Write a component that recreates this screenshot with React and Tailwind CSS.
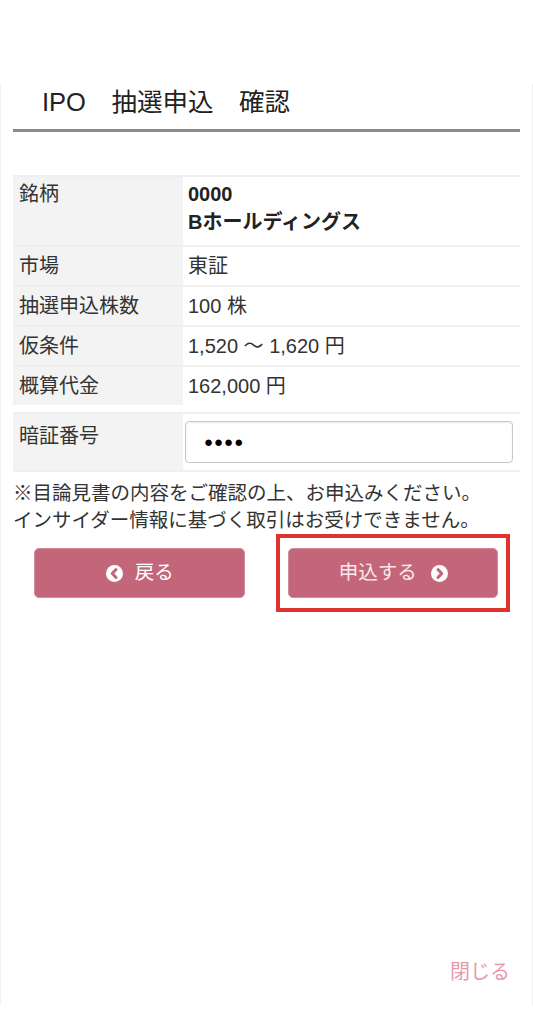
import React from "react";

const rows = [
  { label: "市場", value: "東証" },
  { label: "抽選申込株数", value: "100 株" },
  { label: "仮条件", value: "1,520 〜 1,620 円" },
  { label: "概算代金", value: "162,000 円" },
];

const ChevronCircle = ({ dir = "left" }) => (
  <svg width="17" height="17" viewBox="0 0 16 16">
    <circle cx="8" cy="8" r="8" fill="#ffffff" />
    {dir === "left" ? (
      <path d="M9.4 4.4 5.8 8l3.6 3.6" fill="none" stroke="#c46679" strokeWidth="2.8" strokeLinecap="round" strokeLinejoin="round" />
    ) : (
      <path d="M6.6 4.4 10.2 8l-3.6 3.6" fill="none" stroke="#c46679" strokeWidth="2.8" strokeLinecap="round" strokeLinejoin="round" />
    )}
  </svg>
);

export default function App() {
  return (
    <div
      className="h-[1025px] overflow-hidden bg-white text-[#333]"
      style={{ fontFamily: '"Liberation Sans", "Noto Sans CJK JP", sans-serif' }}
    >
      <div className="mt-[104px] h-[921px] border-x border-[#f1f1f1] px-[12px]">
        {/* Title */}
        <div className="-mt-[20px]">
          <h1 className="pl-[29px] text-[25.5px] leading-[36px] text-[#222]">
            IPO　抽選申込　確認
          </h1>
          <div className="mt-[9px] h-[3px] bg-[#8c8c8c]" />
        </div>

        {/* Detail table */}
        <div className="mt-[43px] text-[20px]">
          <div className="flex border-t-2 border-[#efefef]">
            <div className="h-[68px] w-[170px] shrink-0 bg-[#f3f3f3] px-[6px] pt-[3px] leading-[28px]">
              銘柄
            </div>
            <div className="flex-1 px-[5px] pt-[3px] font-semibold leading-[28px] text-[#222]">
              <div>0000</div>
              <div>Bホールディングス</div>
            </div>
          </div>
          {rows.map((row) => (
            <div key={row.label} className="flex border-t-2 border-[#efefef]">
              <div className="w-[170px] shrink-0 bg-[#f3f3f3] px-[6px] py-[5px] leading-[28px]">
                {row.label}
              </div>
              <div className="flex-1 px-[5px] py-[5px] leading-[28px]">{row.value}</div>
            </div>
          ))}
        </div>

        {/* PIN */}
        <div className="mt-[7px] flex border-y-2 border-[#efefef] text-[20px]">
          <div className="h-[56px] w-[170px] shrink-0 bg-[#f3f3f3] px-[6px] pt-[8px] leading-[28px]">
            暗証番号
          </div>
          <div className="flex-1 pl-[2px] pr-[7px] pt-[7px]">
            <div className="flex h-[42px] items-center rounded-[4px] border border-[#c8c8c8] pl-[18px] text-[15px] tracking-[1px] text-black shadow-[inset_0_1px_2px_rgba(0,0,0,0.08)]">
              ●●●●
            </div>
          </div>
        </div>

        {/* Notes */}
        <div className="mt-[8px] text-[19.5px] leading-[27px] text-[#333]">
          <p>※目論見書の内容をご確認の上、お申込みください。</p>
          <p>インサイダー情報に基づく取引はお受けできません。</p>
        </div>

        {/* Buttons */}
        <div className="grid grid-cols-2 items-center">
          <div className="flex justify-center">
            <button className="flex h-[50px] w-[211px] items-center justify-center gap-[12px] rounded-[5px] border border-[#d28a98] bg-[#c46679] text-[19.5px] text-white">
              <ChevronCircle dir="left" />
              <span>戻る</span>
            </button>
          </div>
          <div className="flex justify-center">
            <div className="border-4 border-[#e0332f] px-[8px] py-[10px]">
              <button className="flex h-[50px] w-[210px] items-center justify-center gap-[14px] rounded-[5px] border border-[#d28a98] bg-[#c46679] text-[19.5px] text-[#f7e9ec]">
                <span>申込する</span>
                <ChevronCircle dir="right" />
              </button>
            </div>
          </div>
        </div>

        {/* Close */}
        <div className="mt-[346px] flex justify-end pr-[10px]">
          <span className="text-[20px] leading-[28px] text-[#e59aab]">閉じる</span>
        </div>
      </div>
    </div>
  );
}
